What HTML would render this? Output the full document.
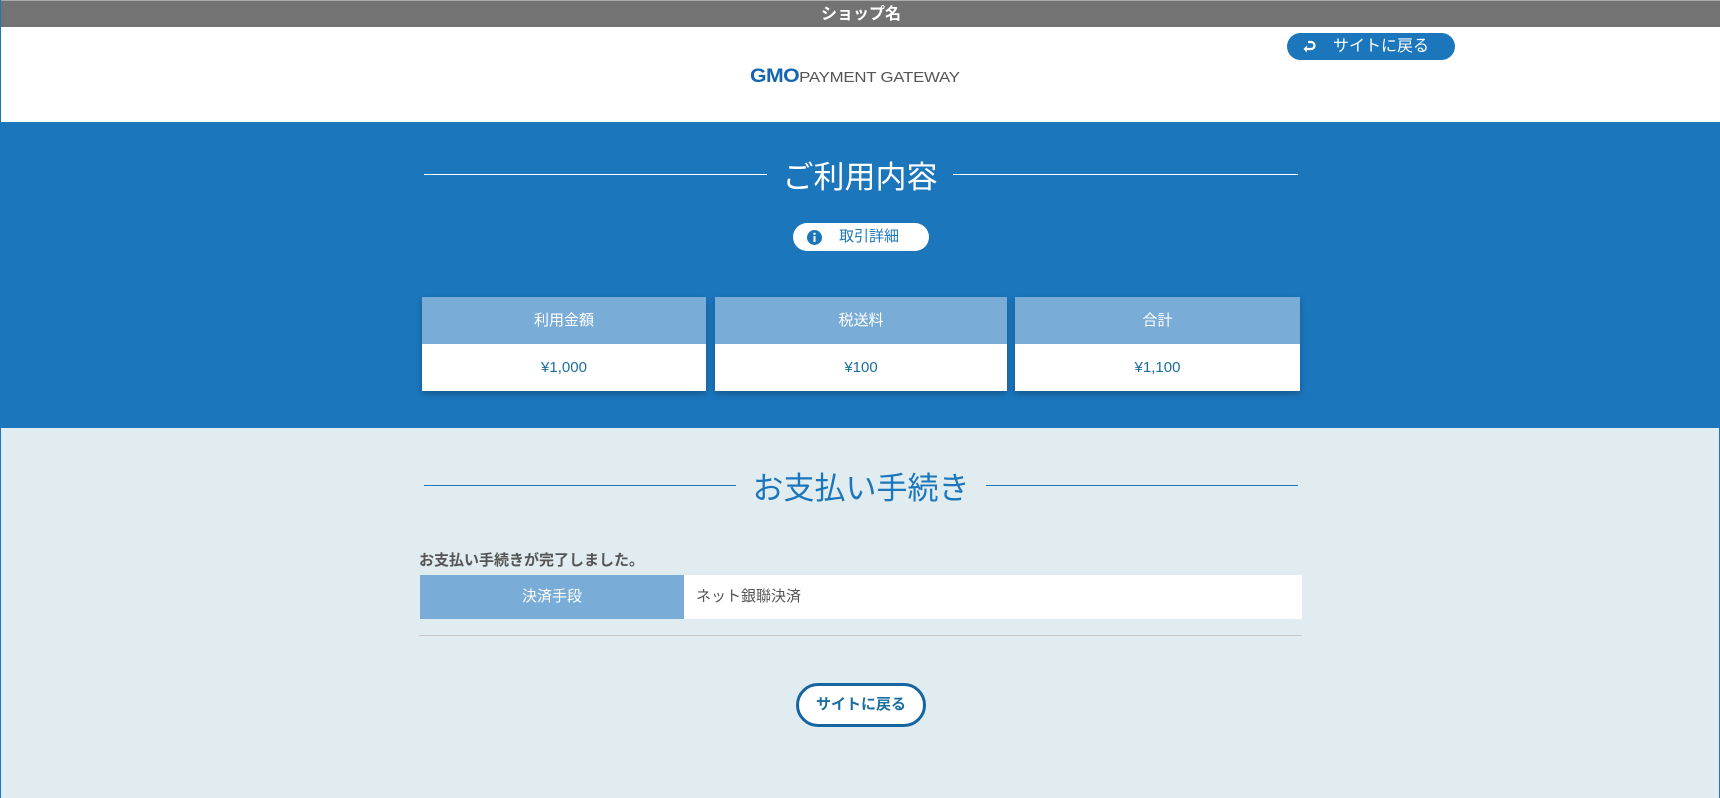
<!DOCTYPE html>
<html><head><meta charset="utf-8"><style>
*{margin:0;padding:0;box-sizing:border-box}
body{width:1720px;height:798px;overflow:hidden;background:#e0ecef;font-family:"Liberation Sans","Noto Sans CJK JP",sans-serif;position:relative;border-left:1px solid #1b76bc;border-right:1px solid #1b76bc}
.abs{position:absolute}
.top{left:0;top:0;width:1720px;height:27px;background:#737373;color:#fff;font-weight:bold;font-size:16px;text-align:center;line-height:27px;border-top:1px solid #aaa}
.hdr{left:0;top:27px;width:1720px;height:95px;background:#fff}
.blue{left:0;top:122px;width:1720px;height:306px;background:#1b76bc}
.line{height:1px}
.t1{color:#fff;font-size:31px;top:152px;left:766px;width:186px;text-align:center}
.btn1{left:1286px;top:33px;width:168px;height:27px;border-radius:14px;background:#1b76bc;color:#fff;font-size:16px;line-height:27px;padding-left:46px}
.info{left:792px;top:223px;width:136px;height:28px;border-radius:14px;background:#fff;color:#1b76bc;font-size:15px;line-height:28px;padding-left:46px}
.card{top:297px;height:94px;background:#fff;box-shadow:0 3px 6px rgba(0,0,0,.25);text-align:center}
.card .h{height:47px;background:#79acd6;color:#fff;font-size:15px;line-height:47px}
.card .v{height:47px;color:#1b6f9f;font-size:15px;line-height:47px}
.t2{color:#1b76bc;font-size:31px;top:463px;left:735px;width:250px;text-align:center}
</style></head><body>
<div class="abs top">ショップ名</div>
<div class="abs hdr"></div>
<div class="abs btn1"><svg class="abs" style="left:14px;top:6px" width="16" height="16" viewBox="0 0 16 16"><path d="M7 3h3a3.5 3.5 0 0 1 0 7H4" fill="none" stroke="#fff" stroke-width="2.2"/><path d="M6 6.5L2.5 10 6 13.5z" fill="#fff"/></svg>サイトに戻る</div>
<div class="abs" style="left:749px;top:68px;line-height:18px;white-space:nowrap;transform:scaleX(1.12);transform-origin:left"><b style="color:#1565b0;font-size:19px;letter-spacing:-0.5px">GMO</b><span style="color:#555;font-size:15px;letter-spacing:-0.2px">PAYMENT GATEWAY</span></div>
<div class="abs blue"></div>
<div class="abs line" style="left:423px;top:174px;width:343px;background:#fff"></div>
<div class="abs line" style="left:952px;top:174px;width:345px;background:#fff"></div>
<div class="abs t1">ご利用内容</div>
<div class="abs info"><svg class="abs" style="left:14px;top:7px" width="15" height="15" viewBox="0 0 15 15"><circle cx="7.5" cy="7.5" r="7.5" fill="#1b76bc"/><rect x="6.5" y="6" width="2" height="6" fill="#fff"/><circle cx="7.5" cy="3.8" r="1.2" fill="#fff"/></svg>取引詳細</div>
<div class="abs card" style="left:421px;width:284px"><div class="h">利用金額</div><div class="v">¥1,000</div></div>
<div class="abs card" style="left:714px;width:292px"><div class="h">税送料</div><div class="v">¥100</div></div>
<div class="abs card" style="left:1014px;width:285px"><div class="h">合計</div><div class="v">¥1,100</div></div>
<div class="abs line" style="left:423px;top:485px;width:312px;background:#1b76bc"></div>
<div class="abs line" style="left:985px;top:485px;width:312px;background:#1b76bc"></div>
<div class="abs t2">お支払い手続き</div>
<div class="abs" style="left:418px;top:549px;font-size:15px;font-weight:bold;color:#555">お支払い手続きが完了しました。</div>
<div class="abs" style="left:419px;top:575px;width:882px;height:44px;background:#fff"></div>
<div class="abs" style="left:419px;top:575px;width:264px;height:44px;background:#79acd6;color:#fff;font-size:15px;text-align:center;line-height:44px">決済手段</div>
<div class="abs" style="left:695px;top:575px;height:44px;line-height:44px;font-size:15px;color:#555">ネット銀聯決済</div>
<div class="abs" style="left:418px;top:635px;width:883px;height:1px;background:#c8c8c8"></div>
<div class="abs" style="left:795px;top:683px;width:130px;height:44px;border:3px solid #1565a0;border-radius:22px;background:#fff;color:#1b6f9f;font-weight:bold;font-size:15px;text-align:center;line-height:38px">サイトに戻る</div>
</body></html>
